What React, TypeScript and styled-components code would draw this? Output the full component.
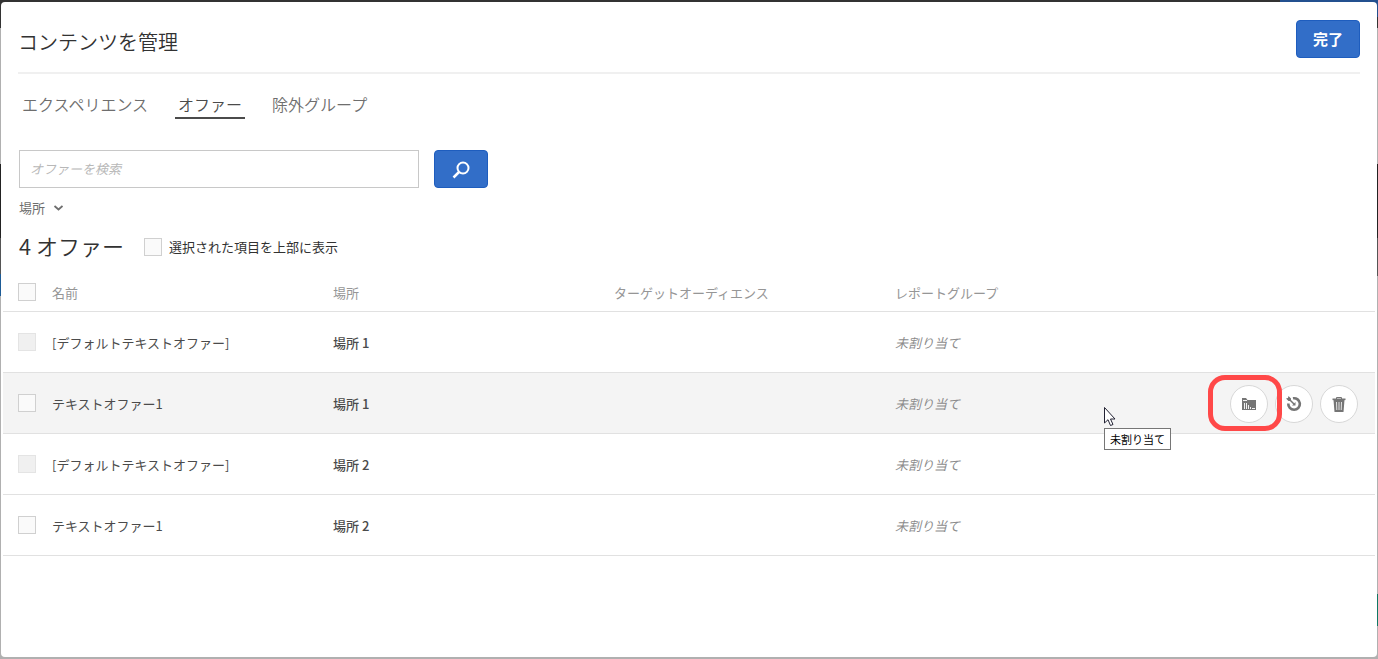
import React from "react";
import styled, { createGlobalStyle, css } from "styled-components";

const Global = createGlobalStyle`
  *, *::before, *::after { box-sizing: border-box; }
  body {
    margin: 0;
    background: #b0b0b0;
    color: #323232;
    font: 13px/20px "Noto Sans CJK JP", sans-serif;
  }
  button, input { font: inherit; }
`;

const Backdrop = styled.div`
  display: flex;
  min-height: 100vh;
  padding: 2px 1px;
  background:
    linear-gradient(#23508f, #23508f) right top / 98px 17px no-repeat,
    linear-gradient(#0f7864, #0f7864) right 594px / 1px 32px no-repeat,
    linear-gradient(#1d5b96, #1d5b96) left 274px / 1px 22px no-repeat,
    linear-gradient(#333 28px, #b0b0b0 28px, #b0b0b0 164px, #222 164px, #222 238px, #555 238px, #555 276px, #b0b0b0 276px);
`;

const Dialog = styled.main`
  position: relative;
  flex: 1;
  min-width: 0;
  background: #fff;
  border-radius: 4px;
`;

const Header = styled.header`
  display: flex;
  justify-content: space-between;
  align-items: center;
  height: 72px;
  margin: 0 17px;
  padding-top: 4px;
  border-bottom: 2px solid #f0f0f0;
`;

const Title = styled.h1`
  margin: 0;
  padding-top: 6px;
  font-size: 20px;
  font-weight: 350;
  line-height: 30px;
`;

const PrimaryButton = styled.button<{ $width: number }>`
  display: flex;
  align-items: center;
  justify-content: center;
  width: ${(p) => p.$width}px;
  height: 38px;
  padding: 0;
  border: 1px solid #1e5dbe;
  border-radius: 4px;
  background: #326ec8;
  color: #fff;
  font-size: 15px;
  font-weight: 700;
`;

const Tabs = styled.nav`
  display: flex;
  gap: 24px;
  padding: 18px 18px 0;
`;

const Tab = styled.a<{ $active?: boolean }>`
  padding: 0 3px;
  border-bottom: 2px solid ${(p) => (p.$active ? "#4b4b4b" : "transparent")};
  color: ${(p) => (p.$active ? "#4b4b4b" : "#6e6e6e")};
  font-size: 16px;
  font-weight: 350;
  line-height: 25px;
  text-decoration: none;
`;

const Search = styled.form`
  display: flex;
  gap: 15px;
  padding: 31px 18px 0;
`;

const SearchInput = styled.input`
  width: 400px;
  height: 38px;
  padding: 0 10px 2px;
  border: 1px solid #c8c8c8;
  color: #323232;
  &::placeholder { color: #b8b8b8; font-style: italic; opacity: 1; }
`;

const Filter = styled.button`
  display: flex;
  align-items: center;
  gap: 8px;
  margin: 10px 18px 0;
  padding: 0;
  border: 0;
  background: none;
  color: #6e6e6e;
`;

const Summary = styled.div`
  display: flex;
  align-items: center;
  gap: 20px;
  padding: 11px 18px 0;
`;

const Count = styled.h2`
  margin: 0;
  font-size: 22px;
  font-weight: 350;
  line-height: 32px;
`;

const CheckLabel = styled.label`
  display: flex;
  align-items: center;
  gap: 7px;
  padding-top: 4px;
`;

const Check = styled.input.attrs({ type: "checkbox" })`
  appearance: none;
  display: block;
  width: 18px;
  height: 18px;
  margin: 0;
  border: 1px solid #d0d0d0;
  background: #fafafa;
  &:disabled { border-color: #e4e4e4; background: #f0f0f0; }
`;

const Table = styled.table`
  width: calc(100% - 4px);
  margin: 12px 2px 0;
  border-collapse: collapse;
  table-layout: fixed;
`;

const Head = styled.th<{ $width?: string }>`
  width: ${(p) => p.$width ?? "auto"};
  height: 38px;
  padding: 2px 0 0;
  border-bottom: 1px solid #e1e1e1;
  color: #969696;
  font-weight: 400;
  text-align: left;
`;

const cellTone = {
  normal: css`color: #4b4b4b;`,
  strong: css`color: #4b4b4b; font-weight: 500;`,
  muted: css`color: #8c8c8c; font-style: italic;`,
};

const Cell = styled.td<{ $tone?: keyof typeof cellTone }>`
  height: 61px;
  padding: 2px 0 0;
  border-bottom: 1px solid #e1e1e1;
  ${(p) => cellTone[p.$tone ?? "normal"]}
`;

const CheckSlot = styled.div`
  padding: 0 0 2px 15px;
`;

const Row = styled.tr<{ $hovered?: boolean }>`
  background: ${(p) => (p.$hovered ? "#f4f4f4" : "#fff")};
`;

const Actions = styled.div`
  display: flex;
  justify-content: flex-end;
  gap: 7px;
  padding-right: 17px;
`;

const RoundButton = styled.button`
  display: flex;
  align-items: center;
  justify-content: center;
  width: 38px;
  height: 38px;
  padding: 0;
  border: 1px solid #d8d8d8;
  border-radius: 50%;
  background: #fff;
  color: #757575;
`;

const Marked = styled.div`
  position: relative;
  z-index: 1;
  &::after {
    content: "";
    position: absolute;
    inset: -10px -14px -8px -22px;
    border: 5px solid #ff4848;
    border-radius: 17px;
    pointer-events: none;
  }
`;

const Anchor = styled.div`
  position: relative;
`;

const Pointer = styled.svg`
  position: absolute;
  left: 208px;
  top: 12px;
`;

const Tooltip = styled.div`
  position: absolute;
  left: 209px;
  top: 34px;
  padding: 0 5px;
  border: 1px solid #767676;
  background: #fff;
  color: #000;
  font-size: 11px;
  font-style: normal;
  line-height: 20px;
  white-space: nowrap;
`;

const FolderIcon = () => (
  <svg width="16" height="14" viewBox="0 0 16 14" aria-hidden="true">
    <path fill="currentColor" d="M1 1h4l1.500 2H15v10H1z" />
    <path stroke="#fff" d="M2 3.500h4M3.500 12V6M5.500 12V6M7.500 12V8M9.500 12v-2M11 11.500h3" fill="none" strokeWidth=".9" />
  </svg>
);

const TargetIcon = () => (
  <svg width="18" height="18" viewBox="0 0 18 18" fill="none" stroke="currentColor" aria-hidden="true">
    <path strokeWidth="2.600" d="M8 3.300A5.800 5.800 0 1 1 3.300 8.500" />
    <path strokeWidth="1.500" d="M3 3 9 9" />
    <path fill="currentColor" stroke="none" d="M1 3.500 3 3 3.500 1 6 3.500V6H3.500zM7 10.500h3.500V7z" />
  </svg>
);

const TrashIcon = () => (
  <svg width="14" height="16" viewBox="0 0 14 16" fill="none" stroke="currentColor" aria-hidden="true">
    <path d="M4.500 3V1.500h5V3" />
    <path strokeWidth="1.600" d="M.5 3.300h13" />
    <path fill="currentColor" stroke="none" d="M1.500 4h11l-1 12h-9z" />
    <path stroke="#fff" strokeWidth=".8" d="M4.500 6l.3 8M7 6v8M9.500 6l-.3 8" />
  </svg>
);

const offers = [
  { name: "[デフォルトテキストオファー]", place: "場所 1", locked: true },
  { name: "テキストオファー1", place: "場所 1", hovered: true },
  { name: "[デフォルトテキストオファー]", place: "場所 2", locked: true },
  { name: "テキストオファー1", place: "場所 2" },
];

export default function App() {
  return (
    <Backdrop>
      <Global />
      <Dialog>
        <Header>
          <Title>コンテンツを管理</Title>
          <PrimaryButton $width={64}>完了</PrimaryButton>
        </Header>
        <Tabs>
          <Tab href="#experiences">エクスペリエンス</Tab>
          <Tab href="#offers" $active aria-current="page">オファー</Tab>
          <Tab href="#exclusions">除外グループ</Tab>
        </Tabs>
        <Search onSubmit={(e) => e.preventDefault()}>
          <SearchInput type="search" aria-label="オファーを検索" placeholder="オファーを検索" />
          <PrimaryButton $width={54} aria-label="検索">
            <svg width="18" height="20" viewBox="0 0 18 20" fill="none" stroke="#fff" aria-hidden="true">
              <circle cx="11" cy="9" r="5.500" strokeWidth="2" />
              <path d="M7 13 1.500 18.500" strokeWidth="2.500" />
            </svg>
          </PrimaryButton>
        </Search>
        <Filter type="button">
          場所
          <svg width="10" height="6" viewBox="0 0 10 6" fill="none" stroke="currentColor" strokeWidth="1.800" aria-hidden="true">
            <path d="M1.500 1 5.500 4.500 9.500 1" />
          </svg>
        </Filter>
        <Summary>
          <Count>4 オファー</Count>
          <CheckLabel><Check />選択された項目を上部に表示</CheckLabel>
        </Summary>
        <Table>
          <thead>
            <tr>
              <Head $width="49px"><CheckSlot><Check aria-label="すべて選択" /></CheckSlot></Head>
              <Head $width="281px">名前</Head>
              <Head $width="281px">場所</Head>
              <Head $width="281px">ターゲットオーディエンス</Head>
              <Head $width="281px">レポートグループ</Head>
              <Head />
            </tr>
          </thead>
          <tbody>
            {offers.map((o, i) => (
              <Row key={i} $hovered={o.hovered}>
                <Cell><CheckSlot><Check disabled={o.locked} aria-label={o.name} /></CheckSlot></Cell>
                <Cell>{o.name}</Cell>
                <Cell $tone="strong">{o.place}</Cell>
                <Cell />
                <Cell $tone="muted">
                  <Anchor>
                    未割り当て
                    {o.hovered && (
                      <>
                        <Tooltip role="tooltip">未割り当て</Tooltip>
                        <Pointer width="13" height="21" viewBox="0 0 13 21" aria-hidden="true">
                          <path d="M1.500 1.500v15.500l3.500-3.300 2.500 5.800 2.500-1-2.500-5.500h4.500z" fill="#fff" stroke="#223" />
                        </Pointer>
                      </>
                    )}
                  </Anchor>
                </Cell>
                <Cell>
                  {o.hovered && (
                    <Actions>
                      <Marked><RoundButton aria-label="レポートグループ"><FolderIcon /></RoundButton></Marked>
                      <RoundButton aria-label="ターゲット"><TargetIcon /></RoundButton>
                      <RoundButton aria-label="削除"><TrashIcon /></RoundButton>
                    </Actions>
                  )}
                </Cell>
              </Row>
            ))}
          </tbody>
        </Table>
      </Dialog>
    </Backdrop>
  );
}
